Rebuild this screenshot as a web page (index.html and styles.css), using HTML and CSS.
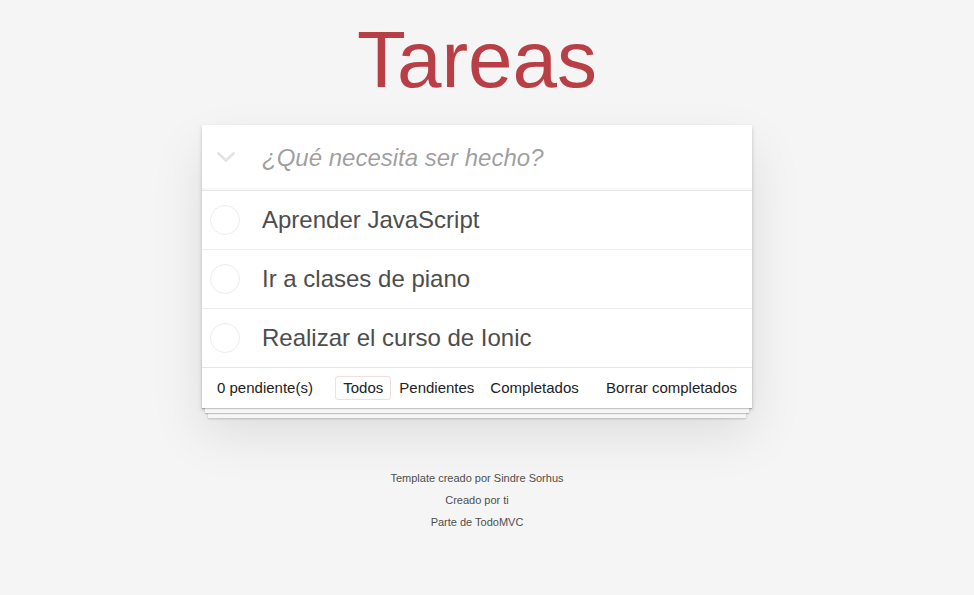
FILE: index.html
```html
<!DOCTYPE html>
<html lang="es">
<head>
<meta charset="utf-8">
<title>Tareas</title>
<link rel="stylesheet" href="styles.css">
</head>
<body>
<div class="viewport">
  <div class="page">
    <h1 class="title">Tareas</h1>
    <section class="todoapp">
      <header class="new-row">
        <button class="toggle-all" aria-label="Marcar todas">
          <svg width="18" height="11" viewBox="0 0 18 11"><polyline points="1.5,1.5 9,8.5 16.5,1.5" fill="none" stroke="#e3e3e3" stroke-width="2.6" stroke-linecap="round" stroke-linejoin="round"/></svg>
        </button>
        <input class="new-todo" placeholder="¿Qué necesita ser hecho?">
      </header>
      <ul class="todo-list">
        <li class="todo"><span class="toggle"></span><span class="label">Aprender JavaScript</span></li>
        <li class="todo"><span class="toggle"></span><span class="label">Ir a clases de piano</span></li>
        <li class="todo"><span class="toggle"></span><span class="label">Realizar el curso de Ionic</span></li>
      </ul>
      <footer class="footer">
        <span class="todo-count">0 pendiente(s)</span>
        <nav class="filters">
          <a class="filter selected">Todos</a>
          <a class="filter">Pendientes</a>
          <a class="filter">Completados</a>
        </nav>
        <span class="clear-completed">Borrar completados</span>
      </footer>
    </section>
    <footer class="info">
      <p>Template creado por Sindre Sorhus</p>
      <p>Creado por ti</p>
      <p>Parte de TodoMVC</p>
    </footer>
  </div>
</div>
</body>
</html>
```

FILE: styles.css
```css
* { box-sizing: border-box; }

html, body {
  margin: 0;
  padding: 0;
}

body {
  background: #f5f5f5;
  font-family: "Liberation Sans", Arial, Helvetica, sans-serif;
  font-size: 14px;
  color: #4d4d4d;
}

.viewport {
  padding-right: 20px;
}

.page {
  width: 550px;
  margin: 0 auto;
}

.title {
  margin: 20px 0 25px;
  height: 80px;
  font-size: 80px;
  line-height: 80px;
  font-weight: 400;
  text-align: center;
  color: #b83f45;
}

.todoapp {
  position: relative;
  background: #fff;
  box-shadow: 0 2px 4px 0 rgba(0, 0, 0, 0.2), 0 25px 50px 0 rgba(0, 0, 0, 0.1);
}

.new-row {
  display: flex;
  align-items: center;
  height: 65px;
  box-shadow: inset 0 -2px 1px rgba(0, 0, 0, 0.03);
}

.toggle-all {
  width: 48px;
  height: 65px;
  padding: 0;
  margin: 0;
  border: none;
  background: transparent;
  display: flex;
  align-items: center;
  justify-content: center;
}

.toggle-all svg { display: block; }

.new-todo {
  flex: 1;
  height: 65px;
  margin: 0;
  padding: 16px 16px 16px 12px;
  border: none;
  outline: none;
  background: transparent;
  font-family: inherit;
  font-size: 24px;
  line-height: 33px;
  color: #4d4d4d;
}

.new-todo::placeholder {
  font-style: italic;
  color: rgba(0, 0, 0, 0.4);
}

.todo-list {
  list-style: none;
  margin: 0;
  padding: 0;
  border-top: 1px solid #e6e6e6;
}

.todo {
  display: flex;
  align-items: center;
  border-bottom: 1px solid #ededed;
}

.todo:last-child { border-bottom: none; }

.toggle {
  flex: none;
  width: 30px;
  height: 30px;
  margin-left: 8px;
  border: 1px solid #ededed;
  border-radius: 50%;
}

.label {
  flex: 1;
  margin-left: 22px;
  padding: 15px 15px 15px 0;
  font-size: 24px;
  line-height: 28px;
  color: #4d4d4d;
}

.footer {
  position: relative;
  display: flex;
  align-items: center;
  justify-content: space-between;
  height: 41px;
  padding: 10px 15px;
  border-top: 1px solid #e6e6e6;
  font-size: 15px;
  line-height: 20px;
  color: #222;
}

.footer::before {
  content: "";
  position: absolute;
  right: 0;
  bottom: 0;
  left: 0;
  height: 50px;
  overflow: hidden;
  pointer-events: none;
  box-shadow: 0 1px 1px rgba(0, 0, 0, 0.2),
              0 8px 0 -3px #f6f6f6,
              0 9px 1px -3px rgba(0, 0, 0, 0.2),
              0 16px 0 -6px #f6f6f6,
              0 17px 2px -6px rgba(0, 0, 0, 0.2);
}

.filters {
  display: flex;
  margin-left: 3px;
}

.filter {
  padding: 3px 7px;
  line-height: 16px;
  border: 1px solid transparent;
  border-radius: 3px;
  color: inherit;
  text-decoration: none;
}

.filter.selected {
  border-color: rgba(175, 47, 47, 0.16);
}

.info {
  display: flex;
  flex-direction: column;
  gap: 11px;
  margin-top: 65px;
  color: #4d4d4d;
  font-size: 11px;
  text-align: center;
  text-shadow: 0 1px 0 rgba(255, 255, 255, 0.5);
}

.info p {
  margin: 0;
  line-height: 11px;
}
```
